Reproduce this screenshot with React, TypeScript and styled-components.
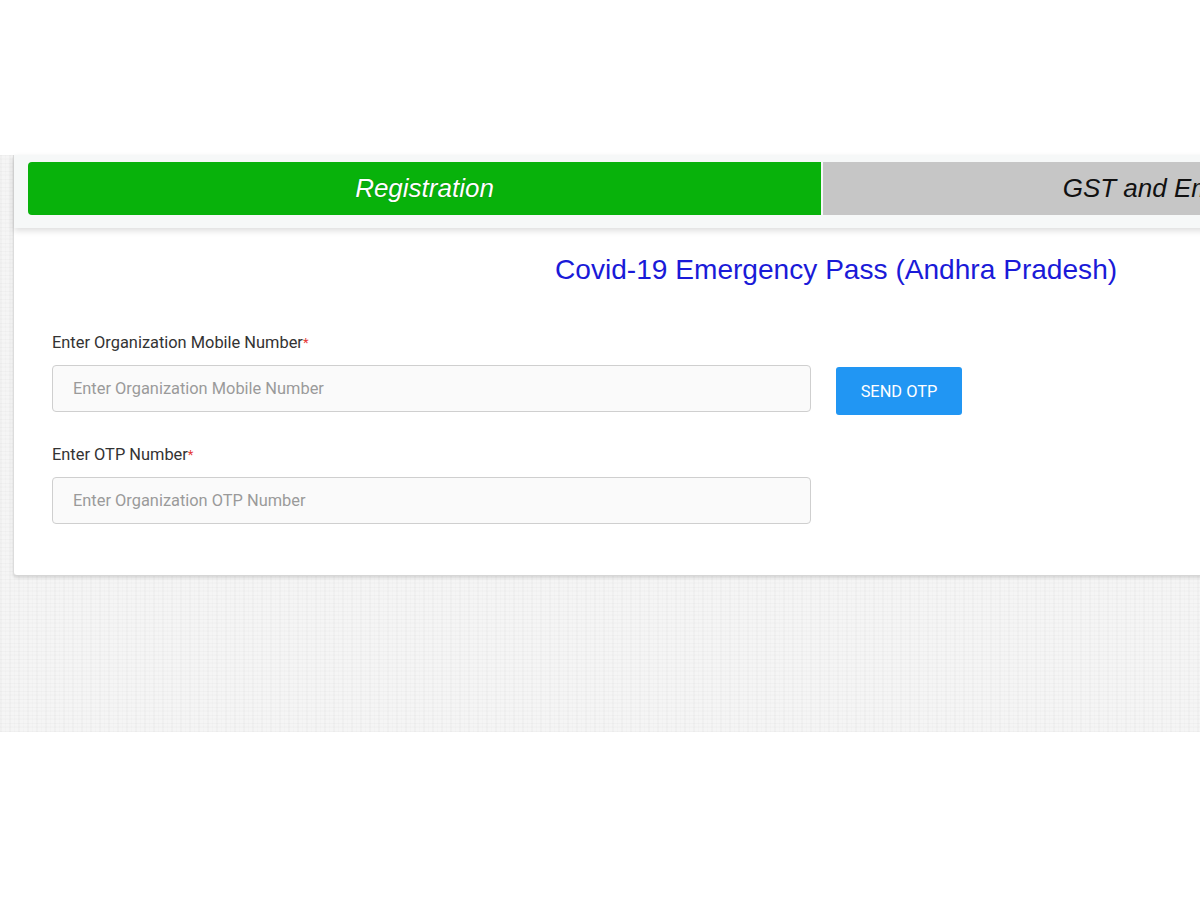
import React from "react";
import styled, { createGlobalStyle } from "styled-components";

const Global = createGlobalStyle`
  html, body { margin: 0; padding: 0; background: #ffffff; overflow: hidden; }
  body { width: 1200px; height: 900px; font-family: Roboto, "Liberation Sans", Arial, sans-serif; }
`;

const Page = styled.div`
  width: 1200px;
  height: 900px;
  overflow: hidden;
  display: flex;
  flex-direction: column;
`;

const TopSpace = styled.div`
  height: 155px;
  flex: none;
  background: #ffffff;
`;

const Pattern = styled.section`
  height: 577px;
  flex: none;
  background-color: #f5f5f5;
  background-image:
    repeating-linear-gradient(90deg, rgba(0,0,0,0.018) 0 2px, transparent 2px 5px, rgba(0,0,0,0.012) 5px 6px, transparent 6px 9px),
    repeating-linear-gradient(0deg, rgba(0,0,0,0.018) 0 1px, transparent 1px 4px, rgba(0,0,0,0.012) 4px 6px, transparent 6px 8px);
  padding-left: 13px;
`;

const Card = styled.div`
  width: 1640px;
  height: 420px;
  background: #ffffff;
  border-left: 1px solid #dcdcdc;
  border-bottom: 1px solid #d6d6d6;
  border-radius: 0 0 0 4px;
  box-shadow: 0 2px 3px rgba(0, 0, 0, 0.12);
  display: flex;
  flex-direction: column;
`;

const TabBar = styled.div`
  background: #f6f8f8;
  padding: 7px 0 13px 14px;
  display: flex;
  gap: 2px;
  box-shadow: 0 3px 6px rgba(0, 0, 0, 0.13);
`;

const Tab = styled.div<{ $active?: boolean }>`
  width: 793px;
  height: 53px;
  display: flex;
  align-items: center;
  justify-content: center;
  border-radius: ${(p) => (p.$active ? "4px 0 0 4px" : "0")};
  background: ${(p) => (p.$active ? "#08b20b" : "#c6c6c6")};
  color: ${(p) => (p.$active ? "#ffffff" : "#111111")};
  font-family: "Liberation Sans", Arial, sans-serif;
  font-style: italic;
  font-size: 26px;
  text-shadow: ${(p) => (p.$active ? "0 0 1px rgba(0,0,0,0.4)" : "none")};
  white-space: nowrap;
`;

const TitleRow = styled.div`
  padding: 22px 0 0 541px;
  height: 40px;
  display: flex;
  align-items: center;
`;

const Title = styled.h1`
  margin: 0;
  font-family: "Liberation Sans", Arial, sans-serif;
  font-weight: normal;
  font-size: 28.1px;
  color: #1a1ad8;
  white-space: nowrap;
`;

const Form = styled.div`
  padding: 43px 0 0 38px;
  display: flex;
  flex-direction: column;
`;

const Label = styled.label`
  display: block;
  font-size: 16.4px;
  color: #333333;
  height: 20px;
  line-height: 20px;
`;

const Star = styled.span`
  color: #e53935;
  font-size: 13px;
  vertical-align: top;
`;

const FieldRow = styled.div`
  display: flex;
  align-items: flex-start;
  gap: 25px;
  margin-top: 12px;
  margin-bottom: 30px;
`;

const Input = styled.input`
  box-sizing: border-box;
  width: 759px;
  height: 47px;
  border: 1px solid #cfcfcf;
  border-radius: 4px;
  background: #fafafa;
  padding: 0 20px;
  font-family: Roboto, "Liberation Sans", Arial, sans-serif;
  font-size: 16.4px;
  color: #333;
  outline: none;
  &::placeholder { color: #9a9a9a; }
`;

const Button = styled.button`
  box-sizing: border-box;
  width: 126px;
  height: 48px;
  margin-top: 2px;
  border: none;
  border-radius: 3px;
  background: #2196f3;
  color: #ffffff;
  font-family: Roboto, "Liberation Sans", Arial, sans-serif;
  font-size: 16.4px;
  cursor: pointer;
`;

const Field = ({ label, placeholder, action }: { label: string; placeholder: string; action?: string }) => (
  <div>
    <Label>
      {label}
      <Star>*</Star>
    </Label>
    <FieldRow>
      <Input placeholder={placeholder} />
      {action && <Button>{action}</Button>}
    </FieldRow>
  </div>
);

export default function App() {
  return (
    <Page>
      <Global />
      <TopSpace />
      <Pattern>
        <Card>
          <TabBar>
            <Tab $active>Registration</Tab>
            <Tab>GST and Employee Details</Tab>
          </TabBar>
          <TitleRow>
            <Title>Covid-19 Emergency Pass (Andhra Pradesh)</Title>
          </TitleRow>
          <Form>
            <Field label="Enter Organization Mobile Number" placeholder="Enter Organization Mobile Number" action="SEND OTP" />
            <Field label="Enter OTP Number" placeholder="Enter Organization OTP Number" />
          </Form>
        </Card>
      </Pattern>
    </Page>
  );
}
